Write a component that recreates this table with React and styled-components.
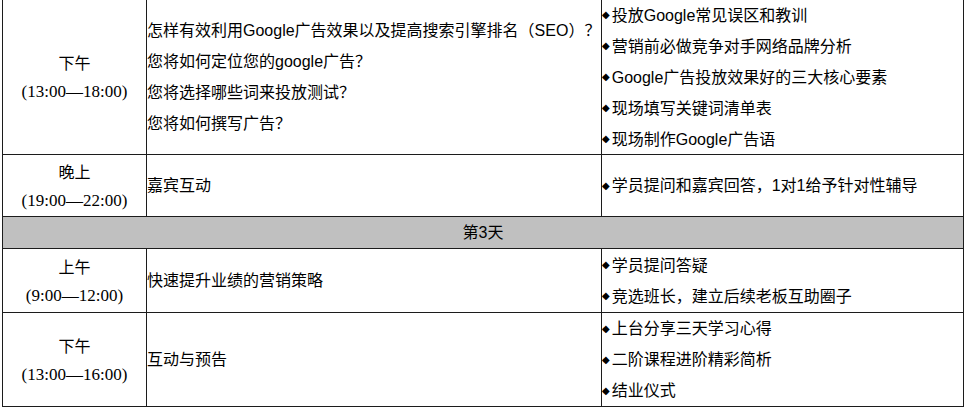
import React from "react";
import styled, {createGlobalStyle, css} from "styled-components";

const GlobalStyle = createGlobalStyle`
  html, body {
    margin: 0;
    padding: 0;
    background: #fff;
  }
  body {
    font-family: "Liberation Sans", "Noto Sans CJK SC", sans-serif;
    color: #000;
  }
`;

const LINE = "#1c1c1c";

const Table = styled.div`
  display: grid;
  grid-template-columns: 144px 455px 362px;
  grid-template-rows: 155px 62px 32px 64px 94px;
  width: 962px;
  margin-left: 2px;
  border-left: 1px solid ${LINE};
`;

const Cell = styled.div`
  box-sizing: border-box;
  border-right: 1px solid ${LINE};
  border-bottom: 1px solid ${LINE};
  display: flex;
  flex-direction: column;
  justify-content: center;
  font-size: 16px;
  line-height: 31px;
  white-space: nowrap;
  ${props =>
    props.center &&
    css`
      align-items: center;
      text-align: center;
    `}
`;

const DayBanner = styled(Cell)`
  grid-column: 1 / span 3;
  background: #c0c0c0;
  align-items: center;
  line-height: 30px;
`;

const Period = styled.span`
  font-family: "Noto Sans CJK SC", sans-serif;
  line-height: 30px;
`;

const Hours = styled.span`
  font-family: "Liberation Serif", "Noto Sans CJK SC", serif;
  font-size: 17px;
  line-height: 30px;
`;

const Point = styled.div`
  display: flex;
  align-items: center;
`;

const Diamond = styled.span`
  font-family: "DejaVu Sans", sans-serif;
  font-size: 10px;
  line-height: 1;
  margin-right: 2px;
`;

const schedule = [
  {
    period: "下午",
    hours: "(13:00—18:00)",
    topics: [
      "怎样有效利用Google广告效果以及提高搜索引擎排名（SEO）？",
      "您将如何定位您的google广告？",
      "您将选择哪些词来投放测试？",
      "您将如何撰写广告？"
    ],
    points: [
      "投放Google常见误区和教训",
      "营销前必做竞争对手网络品牌分析",
      "Google广告投放效果好的三大核心要素",
      "现场填写关键词清单表",
      "现场制作Google广告语"
    ]
  },
  {
    period: "晚上",
    hours: "(19:00—22:00)",
    topics: ["嘉宾互动"],
    points: ["学员提问和嘉宾回答，1对1给予针对性辅导"]
  },
  {day: "第3天"},
  {
    period: "上午",
    hours: "(9:00—12:00)",
    topics: ["快速提升业绩的营销策略"],
    points: ["学员提问答疑", "竞选班长，建立后续老板互助圈子"]
  },
  {
    period: "下午",
    hours: "(13:00—16:00)",
    topics: ["互动与预告"],
    points: ["上台分享三天学习心得", "二阶课程进阶精彩简析", "结业仪式"]
  }
];

export default function App() {
  return (
    <>
      <GlobalStyle />
      <Table>
        {schedule.map((row, i) =>
          row.day ? (
            <DayBanner key={i}>{row.day}</DayBanner>
          ) : (
            <React.Fragment key={i}>
              <Cell center>
                <Period>{row.period}</Period>
                <Hours>{row.hours}</Hours>
              </Cell>
              <Cell>
                {row.topics.map(t => (
                  <div key={t}>{t}</div>
                ))}
              </Cell>
              <Cell>
                {row.points.map(p => (
                  <Point key={p}>
                    <Diamond>◆</Diamond>
                    {p}
                  </Point>
                ))}
              </Cell>
            </React.Fragment>
          )
        )}
      </Table>
    </>
  );
}
